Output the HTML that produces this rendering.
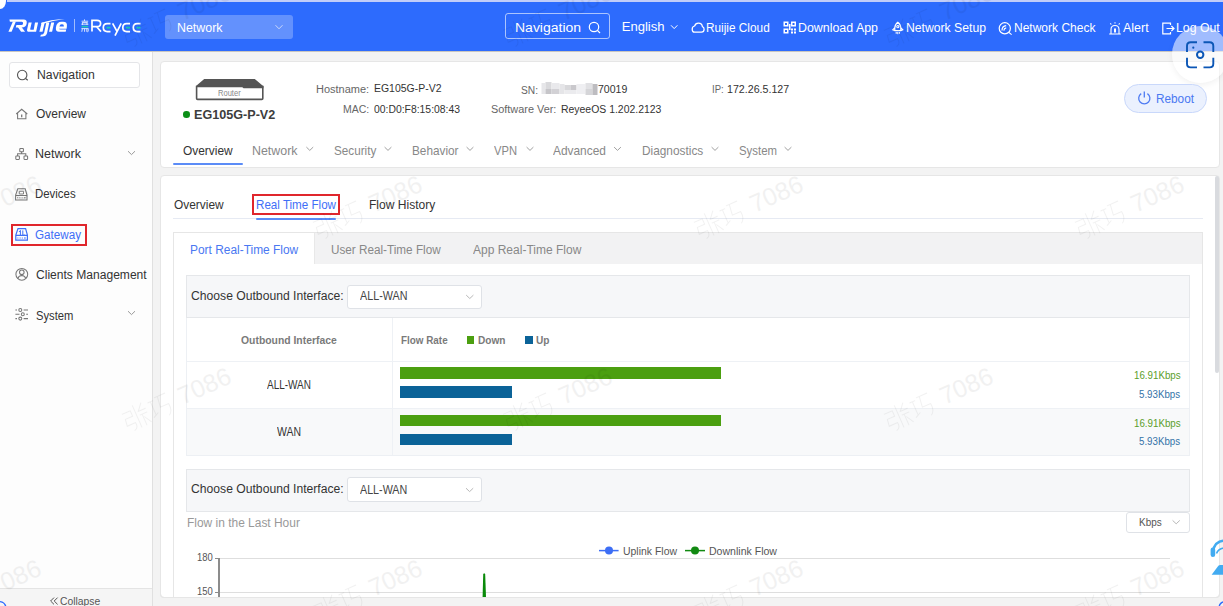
<!DOCTYPE html>
<html><head><meta charset="utf-8"><style>
*{box-sizing:border-box;margin:0;padding:0}
html,body{width:1223px;height:606px;overflow:hidden;background:#f3f3f3;font-family:"Liberation Sans",sans-serif;color:#333}
.t{position:absolute;white-space:nowrap;line-height:1}
.b{position:absolute}
svg{position:absolute;overflow:visible}
</style></head><body>
<div class="b" style="left:0;top:0;width:1223px;height:51px;background:#2d6bfd"></div>
<div class="b" style="left:7px;top:0;width:1216px;height:2px;background:#c1cdf9"></div>
<div class="b" style="left:0;top:0;width:6px;height:9px;background:#fff;border-bottom-right-radius:6px 8px"></div>
<div class="b" style="left:0;top:51px;width:153px;height:555px;background:#fdfdfd;border-right:1px solid #e0e0e0"></div>
<div class="b" style="left:0;top:51px;width:1223px;height:1px;background:#c9c6c0"></div>
<div class="b" style="left:0;top:588px;width:152px;height:18px;background:#f5f5f5;border-top:1px solid #e4e4e4"></div>
<div class="b" style="left:160px;top:61px;width:1060px;height:107px;background:#fff;border:1px solid #e6e6e6;border-radius:4px"></div>
<div class="b" style="left:160px;top:174.5px;width:1060px;height:423.5px;background:#fff;border:1px solid #e6e6e6;border-radius:4px"></div>
<svg style="left:0;top:0" width="1" height="1" fill="#fff">
<path d="M9.4 19.4 H23.6 Q27.3 19.4 26.7 23.2 Q26.1 27.5 21.4 27.5 H15.8 L16.4 25.1 H21.3 Q22.9 25.1 23.1 23.5 Q23.3 21.7 21.7 21.7 H9.9 Z"/>
<path d="M12.9 21.5 H15.9 L11.6 31.7 H8.4 Z"/>
<path d="M17.2 26.3 H20.9 L25.1 31.7 H21.1 Z"/>
<path d="M28.6 22.6 H31.7 L30.2 29 Q29.9 29.7 30.9 29.7 H33.7 L35 22.6 H38.1 L36.1 31.7 H29.1 Q26.6 31.7 27.1 29.4 Z"/>
<path d="M41.7 22.6 H44.7 L42.5 31.7 H39.4 Z"/>
<path d="M46.3 22.6 H49.3 L47.1 33.1 Q46.3 36.6 41.8 36.6 H40.2 L40.9 34.7 Q43.7 34.5 44.2 32.4 Z"/>
<path d="M51.2 22.6 H54.2 L52.1 31.7 H49 Z"/>
<path fill-rule="evenodd" d="M66.6 28.7 H59 Q58.9 29.5 60.6 29.5 H66.2 L65.7 31.8 H59 Q55.4 31.8 55.9 27.5 Q56.6 21.8 61.6 21.8 H63.1 Q67.5 21.8 66.9 26.2 Z M59.4 26.5 H63.9 Q64.1 24.2 62.2 24.2 H61.6 Q59.8 24.2 59.4 26.5 Z"/>
<path d="M41.2 22.9 Q50 19.3 64.8 18.9 Q52 20.4 41.6 24.2 Z"/>
</svg>
<div class="b" style="left:73.5px;top:19px;width:1px;height:12.6px;background:rgba(255,255,255,.55)"></div>
<svg style="left:0;top:0" width="1" height="1" fill="none" stroke="#e8eeff" stroke-width="0.9">
<path d="M84.5 19.4 V21 M81.6 21.2 H88.2 M82.2 22.6 H87.6 M81.4 24.2 H88.4 M82.4 22.4 V25 M87 22.4 V25"/>
<path d="M81.6 26.6 H88.2" stroke="#22c8b2" stroke-width="1.5"/>
<path d="M81.4 28.6 H88.4 M82.4 28.6 L81.8 31.8 M84.6 28.6 V31.8 M86.8 28.6 V31.8 M88.2 28.6 V31.2 Q88.2 31.8 87.4 31.8"/>
</svg>
<svg style="left:0;top:0" width="1" height="1" fill="none" stroke="#fff" stroke-width="1.7">
<path d="M92 31.6 V20.3 H97 Q100.6 20.3 100.6 23.5 Q100.6 26.7 97 26.7 H92.4 M96.6 26.7 L101 31.6"/>
<path d="M110.5 23.6 H107.3 Q103.3 23.6 103.3 27.6 Q103.3 31.6 107.3 31.6 H110.5"/>
<path d="M112.6 23.4 L117 31.3 M121.2 23.4 L115 35.6"/>
<path d="M130 23.6 H126.8 Q122.8 23.6 122.8 27.6 Q122.8 31.6 126.8 31.6 H130"/>
<path d="M140.5 23.6 H137.3 Q133.3 23.6 133.3 27.6 Q133.3 31.6 137.3 31.6 H140.5"/>
<path d="M106.5 27.6 H110.5 M126 27.6 H130 M136.5 27.6 H140.5" stroke="#1ccdb0"/>
</svg>
<div class="b" style="left:165px;top:15px;width:128px;height:23.5px;background:rgba(255,255,255,.26);border-radius:3px"></div>
<div class="t" style="left:177.00px;top:20.66px;font-size:13.08px;color:#ffffff;font-weight:normal;font-style:normal;transform:scaleX(0.9485);transform-origin:0 0;">Network</div>
<svg style="left:0;top:0" width="1" height="1"><path d="M275.5 25.2 L279 28.8 L282.5 25.2" stroke="#c9d7fb" stroke-width="1" fill="none"/></svg>
<div class="b" style="left:505px;top:13.4px;width:105px;height:26px;border:1px solid rgba(255,255,255,.6);border-radius:3px"></div>
<div class="t" style="left:515.20px;top:20.86px;font-size:13.08px;color:#ffffff;font-weight:normal;font-style:normal;transform:scaleX(1.0694);transform-origin:0 0;">Navigation</div>
<svg style="left:0;top:0" width="1" height="1" fill="none" stroke="#fff" stroke-width="1.2"><circle cx="594" cy="27" r="4.7"/><path d="M597.4 30.4 L600 33"/></svg>
<div class="t" style="left:621.70px;top:19.86px;font-size:13.08px;color:#ffffff;font-weight:normal;font-style:normal;">English</div>
<svg style="left:0;top:0" width="1" height="1"><path d="M671 25.3 L674.2 28.6 L677.4 25.3" stroke="#fff" stroke-width="1" fill="none"/></svg>
<svg style="left:0;top:0" width="1" height="1" fill="none" stroke="#fff" stroke-width="1.25"><path d="M694.6 32.2 H701.4 Q704.1 32.2 704.1 29.3 Q704.1 27.2 702.4 26.6 Q702 23 698.4 23 Q695.4 23 694.6 26 Q692.2 26.5 692.2 29.2 Q692.2 32.2 694.6 32.2 Z"/></svg>
<div class="t" style="left:706.30px;top:20.86px;font-size:13.08px;color:#ffffff;font-weight:normal;font-style:normal;transform:scaleX(0.9034);transform-origin:0 0;">Ruijie Cloud</div>
<svg style="left:0;top:0" width="1" height="1" fill="#fff">
<path d="M783.5 21.5h5v5h-5z M785 23h2v2h-2z" fill-rule="evenodd"/>
<path d="M791 21.5h5v5h-5z M792.5 23h2v2h-2z" fill-rule="evenodd"/>
<path d="M783.5 28.5h5v5h-5z M785 30h2v2h-2z" fill-rule="evenodd"/>
<rect x="791" y="28.5" width="2" height="2"/><rect x="794" y="28.5" width="2" height="2"/><rect x="791" y="31.5" width="2" height="2"/><rect x="794" y="31.5" width="2" height="2"/><rect x="789" y="24" width="1.5" height="6"/>
</svg>
<div class="t" style="left:798.00px;top:20.86px;font-size:13.08px;color:#ffffff;font-weight:normal;font-style:normal;transform:scaleX(0.9481);transform-origin:0 0;">Download App</div>
<svg style="left:0;top:0" width="1" height="1" fill="none" stroke="#fff" stroke-width="1.15"><path d="M897.8 22.2 Q900.8 24.4 900.8 28 V30.6 H894.8 V28 Q894.8 24.4 897.8 22.2 Z M894.8 27.6 L892.8 29.8 L894.8 30.6 M900.8 27.6 L902.8 29.8 L900.8 30.6"/><circle cx="897.8" cy="26.6" r="1.1"/><path d="M896.2 32 V33.8 M897.8 32 V34.2 M899.4 32 V33.8" stroke-width="1"/></svg>
<div class="t" style="left:906.00px;top:20.86px;font-size:13.08px;color:#ffffff;font-weight:normal;font-style:normal;transform:scaleX(0.9322);transform-origin:0 0;">Network Setup</div>
<svg style="left:0;top:0" width="1" height="1" fill="none" stroke="#fff" stroke-width="1.2"><circle cx="1004.8" cy="28.3" r="5.6"/><path d="M1002 30.5 Q1002 26 1006.2 25.6 M1003.8 30.6 Q1004 28.2 1006.2 27.8" /><path d="M1008.8 32.4 L1011.6 34.6"/></svg>
<div class="t" style="left:1013.80px;top:20.66px;font-size:13.08px;color:#ffffff;font-weight:normal;font-style:normal;transform:scaleX(0.9182);transform-origin:0 0;">Network Check</div>
<svg style="left:0;top:0" width="1" height="1" fill="none" stroke="#fff" stroke-width="1.1"><path d="M1111 33.8 V29.5 Q1111 25.5 1115 25.5 Q1119 25.5 1119 29.5 V33.8 M1109.2 34 H1120.8 M1115 22.3 V23.6 M1110.3 23.3 L1111.3 24.5 M1119.7 23.3 L1118.7 24.5"/><rect x="1114" y="28.5" width="2" height="4" fill="#fff" stroke="none"/></svg>
<div class="t" style="left:1122.80px;top:20.66px;font-size:13.08px;color:#ffffff;font-weight:normal;font-style:normal;transform:scaleX(0.9560);transform-origin:0 0;">Alert</div>
<svg style="left:0;top:0" width="1" height="1" fill="none" stroke="#fff" stroke-width="1.2"><path d="M1170.5 25 V23.2 H1162.8 V33.8 H1170.5 V32 M1166.5 28.5 H1174 M1171.4 26 L1174 28.5 L1171.4 31"/></svg>
<div class="t" style="left:1176.30px;top:20.66px;font-size:13.08px;color:#ffffff;font-weight:normal;font-style:normal;transform:scaleX(0.9384);transform-origin:0 0;">Log Out</div>
<div class="b" style="left:1172.2px;top:26.4px;width:56.6px;height:56.6px;border-radius:50%;background:rgba(255,255,255,.55);box-shadow:0 2px 6px rgba(0,0,0,.06)"></div>
<svg style="left:0;top:0" width="1" height="1" fill="none" stroke="#0b56b6" stroke-width="1.9">
<path d="M1187 52 V46 Q1187 42.3 1190.7 42.3 H1197 M1203.5 42.3 H1209.6 Q1213.3 42.3 1213.3 46 V52 M1213.3 57.8 V63.7 Q1213.3 67.4 1209.6 67.4 H1203.5 M1197 67.4 H1190.7 Q1187 67.4 1187 63.7 V57.8"/>
<circle cx="1200.2" cy="54.8" r="3.2" stroke-width="2"/>
<circle cx="1193.3" cy="47.7" r="1.1" fill="#0b56b6" stroke="none"/>
</svg>
<div class="b" style="left:8.6px;top:61.5px;width:131px;height:26.2px;background:#fff;border:1px solid #e4e5e8;border-radius:3px"></div>
<svg style="left:0;top:0" width="1" height="1" fill="none" stroke="#555" stroke-width="1.1"><circle cx="22.2" cy="75" r="4.7"/><path d="M25.6 78.5 L27.8 80.2"/></svg>
<div class="t" style="left:36.80px;top:68.26px;font-size:13.08px;color:#333333;font-weight:normal;font-style:normal;transform:scaleX(0.9367);transform-origin:0 0;">Navigation</div>
<svg style="left:0;top:0" width="1" height="1" fill="none" stroke="#777" stroke-width="1.05"><path d="M16.2 114 L21.7 109.3 L27.3 114 M17.6 113 V118.8 H25.9 V113"/><path d="M21.7 114.6 V117.2" stroke-width="1.3"/></svg>
<div class="t" style="left:35.60px;top:107.26px;font-size:13.08px;color:#333333;font-weight:normal;font-style:normal;transform:scaleX(0.9166);transform-origin:0 0;">Overview</div>
<svg style="left:0;top:0" width="1" height="1" fill="none" stroke="#777" stroke-width="1.05"><rect x="19.8" y="148.4" width="3.6" height="3.4" rx=".6"/><rect x="15.8" y="156" width="3.6" height="3.4" rx=".6"/><rect x="24" y="156" width="3.6" height="3.4" rx=".6"/><path d="M21.6 151.8 V153.8 M17.6 156 V153.8 H25.8 V156"/></svg>
<div class="t" style="left:35.40px;top:147.46px;font-size:13.08px;color:#333333;font-weight:normal;font-style:normal;transform:scaleX(0.9589);transform-origin:0 0;">Network</div>
<svg style="left:0;top:0" width="1" height="1"><path d="M128 151.2 L131.5 154.6 L135 151.2" stroke="#999" stroke-width="1" fill="none"/></svg>
<svg style="left:0;top:0" width="1" height="1" fill="none" stroke="#777" stroke-width="1.05"><path d="M17.8 188.8 H25.2 L27 195 V200 H15.6 V195 Z M15.6 195.5 H27"/><path d="M19.3 191.3 H23.5 V194 H19.3 Z" stroke-width=".9"/><path d="M17.2 197.8 H18.2 M19.4 197.8 H20.4 M21.6 197.8 H22.6 M23.8 197.8 H25.6" stroke-width="1"/></svg>
<div class="t" style="left:35.40px;top:187.46px;font-size:13.08px;color:#333333;font-weight:normal;font-style:normal;transform:scaleX(0.8730);transform-origin:0 0;">Devices</div>
<svg style="left:0;top:0" width="1" height="1" fill="none" stroke="#3f6ff7" stroke-width="1.2"><path d="M18 228.6 H25.6 L27.4 235 V240.2 H15.8 V235 Z M15.8 235.4 H27.4"/><path d="M20.4 236 V230.4 M19 232 L20.4 230.4 M22.8 230.4 V236 L24.2 234.4" stroke-width="1"/><path d="M17.4 238 H18.4 M19.6 238 H20.6 M21.8 238 H22.8 M24 238 H25.8" stroke-width="1"/></svg>
<div class="t" style="left:35.00px;top:227.86px;font-size:13.08px;color:#3f6ff7;font-weight:normal;font-style:normal;transform:scaleX(0.8914);transform-origin:0 0;">Gateway</div>
<div class="b" style="left:11px;top:224px;width:75.7px;height:21.6px;border:2px solid #e0262c"></div>
<svg style="left:0;top:0" width="1" height="1" fill="none" stroke="#777" stroke-width="1.05"><circle cx="21.8" cy="274.3" r="5.9"/><circle cx="21.8" cy="272.3" r="2.3"/><path d="M17.8 278.6 Q18.6 275.6 21.8 275.4 Q25 275.6 25.8 278.6"/></svg>
<div class="t" style="left:35.60px;top:268.06px;font-size:13.08px;color:#333333;font-weight:normal;font-style:normal;transform:scaleX(0.9228);transform-origin:0 0;">Clients Management</div>
<svg style="left:0;top:0" width="1" height="1" fill="none" stroke="#777" stroke-width="1.05"><path d="M15.4 310 H17 M23.6 310 H28 M15.4 314.3 H19.5 M26.2 314.3 H28 M15.4 318.6 H17 M23.6 318.6 H28"/><circle cx="20.3" cy="310" r="1.5"/><circle cx="22.8" cy="314.3" r="1.5"/><circle cx="20.3" cy="318.6" r="1.5"/></svg>
<div class="t" style="left:35.60px;top:308.66px;font-size:13.08px;color:#333333;font-weight:normal;font-style:normal;transform:scaleX(0.8573);transform-origin:0 0;">System</div>
<svg style="left:0;top:0" width="1" height="1"><path d="M128 311.2 L131.5 314.6 L135 311.2" stroke="#999" stroke-width="1" fill="none"/></svg>
<svg style="left:0;top:0" width="1" height="1" fill="none" stroke="#555" stroke-width="1"><path d="M54 597.6 L50.6 601 L54 604.4 M57.6 597.6 L54.2 601 L57.6 604.4"/></svg>
<div class="t" style="left:59.50px;top:594.79px;font-size:11.63px;color:#555;font-weight:normal;font-style:normal;transform:scaleX(0.8910);transform-origin:0 0;">Collapse</div>
<svg style="left:0;top:0" width="1" height="1"><path d="M-0.5 601.6 Q4.6 602 5.8 606.5" stroke="#2d6bfd" stroke-width="1.4" fill="#fff"/></svg>
<svg style="left:0;top:0" width="1" height="1">
<path d="M204.2 79 H254.8 L263.4 86.2 V88.3 H243.5 L242.3 87 H196 V86 Z" fill="#555"/>
<path d="M196.6 86.5 H262.8 V98.4 Q262.8 99.4 261.8 99.4 H197.6 Q196.6 99.4 196.6 98.4 Z" fill="none" stroke="#555" stroke-width="1.6"/>
</svg>
<div class="t" style="left:218.10px;top:89.49px;font-size:9.01px;color:#8a8a8a;font-weight:normal;font-style:normal;transform:scaleX(0.8397);transform-origin:0 0;">Router</div>
<div class="b" style="left:183.2px;top:111.3px;width:6.6px;height:6.6px;border-radius:50%;background:#0b8f17"></div>
<div class="t" style="left:193.60px;top:109.64px;font-size:11.92px;color:#3d3d3d;font-weight:bold;font-style:normal;transform:scaleX(1.0589);transform-origin:0 0;">EG105G-P-V2</div>
<div class="t" style="left:316.40px;top:83.98px;font-size:11.05px;color:#666;font-weight:normal;font-style:normal;transform:scaleX(0.9942);transform-origin:0 0;">Hostname:</div>
<div class="t" style="left:374.00px;top:83.28px;font-size:11.05px;color:#333;font-weight:normal;font-style:normal;transform:scaleX(0.9474);transform-origin:0 0;">EG105G-P-V2</div>
<div class="t" style="left:343.30px;top:104.38px;font-size:11.05px;color:#666;font-weight:normal;font-style:normal;transform:scaleX(0.9487);transform-origin:0 0;">MAC:</div>
<div class="t" style="left:374.00px;top:103.78px;font-size:11.05px;color:#333;font-weight:normal;font-style:normal;transform:scaleX(0.9397);transform-origin:0 0;">00:D0:F8:15:08:43</div>
<div class="t" style="left:520.60px;top:84.58px;font-size:11.05px;color:#666;font-weight:normal;font-style:normal;transform:scaleX(0.9243);transform-origin:0 0;">SN:</div>
<svg style="left:0;top:0" width="1" height="1">
<rect x="541.5" y="83" width="4" height="11" fill="#e6e6e9"/>
<rect x="545.5" y="82" width="6" height="7" fill="#d9d9dc"/><rect x="545.5" y="89" width="6" height="5" fill="#c6c5c9"/>
<rect x="551.5" y="83" width="8" height="6" fill="#e9e9ec"/><rect x="551.5" y="89" width="8" height="5" fill="#d2d1d5"/>
<rect x="559.5" y="84" width="5" height="10" fill="#e5e5e8"/>
<rect x="564.5" y="85" width="6" height="5" fill="#d8d8db"/><rect x="570.5" y="85" width="6" height="5" fill="#c9c8cc"/>
<rect x="564.5" y="90" width="12" height="4" fill="#ebebee"/>
<rect x="576.5" y="84" width="9" height="10" fill="#efeff2"/>
<rect x="585.5" y="83" width="7" height="6" fill="#e1e1e4"/><rect x="585.5" y="89" width="7" height="6" fill="#d5d5d8"/>
<rect x="592.5" y="84" width="5" height="11" fill="#bdbcc0"/>
</svg>
<div class="t" style="left:597.70px;top:83.98px;font-size:11.05px;color:#333;font-weight:normal;font-style:normal;transform:scaleX(0.9541);transform-origin:0 0;">70019</div>
<div class="t" style="left:490.50px;top:104.28px;font-size:11.05px;color:#666;font-weight:normal;font-style:normal;transform:scaleX(0.9859);transform-origin:0 0;">Software Ver:</div>
<div class="t" style="left:560.60px;top:103.58px;font-size:11.05px;color:#333;font-weight:normal;font-style:normal;transform:scaleX(0.9448);transform-origin:0 0;">ReyeeOS 1.202.2123</div>
<div class="t" style="left:711.60px;top:83.98px;font-size:11.05px;color:#666;font-weight:normal;font-style:normal;transform:scaleX(0.8646);transform-origin:0 0;">IP:</div>
<div class="t" style="left:727.30px;top:83.98px;font-size:11.05px;color:#333;font-weight:normal;font-style:normal;transform:scaleX(0.9642);transform-origin:0 0;">172.26.5.127</div>
<div class="b" style="left:1124px;top:83.8px;width:83px;height:29.7px;border-radius:15px;background:#ebf1fe;border:1px solid #c9d8fb"></div>
<svg style="left:0;top:0" width="1" height="1" fill="none" stroke="#4f7cf3" stroke-width="1.3"><path d="M1141.2 93.6 A5.6 5.6 0 1 0 1147.4 93.6"/><path d="M1144.3 91.6 V97.6"/></svg>
<div class="t" style="left:1156.00px;top:92.24px;font-size:13.52px;color:#4a78f2;font-weight:normal;font-style:normal;transform:scaleX(0.8717);transform-origin:0 0;">Reboot</div>
<div class="t" style="left:183.20px;top:143.91px;font-size:13.37px;color:#333;font-weight:normal;font-style:normal;transform:scaleX(0.8913);transform-origin:0 0;">Overview</div>
<div class="b" style="left:173px;top:162.9px;width:70px;height:2.2px;background:#5b8cf7;border-radius:1px"></div>
<div class="t" style="left:252.40px;top:143.91px;font-size:13.37px;color:#888888;font-weight:normal;font-style:normal;transform:scaleX(0.9279);transform-origin:0 0;">Network</div>
<svg style="left:0;top:0" width="1" height="1"><path d="M306.40000000000003 147.1 L309.8 150.4 L313.2 147.1" stroke="#a0a0a0" stroke-width="1" fill="none"/></svg>
<div class="t" style="left:334.30px;top:143.91px;font-size:13.37px;color:#888888;font-weight:normal;font-style:normal;transform:scaleX(0.8763);transform-origin:0 0;">Security</div>
<svg style="left:0;top:0" width="1" height="1"><path d="M384.6 147.1 L388 150.4 L391.4 147.1" stroke="#a0a0a0" stroke-width="1" fill="none"/></svg>
<div class="t" style="left:412.00px;top:143.91px;font-size:13.37px;color:#888888;font-weight:normal;font-style:normal;transform:scaleX(0.8815);transform-origin:0 0;">Behavior</div>
<svg style="left:0;top:0" width="1" height="1"><path d="M466.6 147.1 L470 150.4 L473.4 147.1" stroke="#a0a0a0" stroke-width="1" fill="none"/></svg>
<div class="t" style="left:494.00px;top:143.91px;font-size:13.37px;color:#888888;font-weight:normal;font-style:normal;transform:scaleX(0.8370);transform-origin:0 0;">VPN</div>
<svg style="left:0;top:0" width="1" height="1"><path d="M526.6 147.1 L530 150.4 L533.4 147.1" stroke="#a0a0a0" stroke-width="1" fill="none"/></svg>
<div class="t" style="left:553.00px;top:143.91px;font-size:13.37px;color:#888888;font-weight:normal;font-style:normal;transform:scaleX(0.8907);transform-origin:0 0;">Advanced</div>
<svg style="left:0;top:0" width="1" height="1"><path d="M614.1 147.1 L617.5 150.4 L620.9 147.1" stroke="#a0a0a0" stroke-width="1" fill="none"/></svg>
<div class="t" style="left:641.70px;top:143.91px;font-size:13.37px;color:#888888;font-weight:normal;font-style:normal;transform:scaleX(0.8867);transform-origin:0 0;">Diagnostics</div>
<svg style="left:0;top:0" width="1" height="1"><path d="M711.6 147.1 L715 150.4 L718.4 147.1" stroke="#a0a0a0" stroke-width="1" fill="none"/></svg>
<div class="t" style="left:739.00px;top:143.91px;font-size:13.37px;color:#888888;font-weight:normal;font-style:normal;transform:scaleX(0.8521);transform-origin:0 0;">System</div>
<svg style="left:0;top:0" width="1" height="1"><path d="M784.6 147.1 L788 150.4 L791.4 147.1" stroke="#a0a0a0" stroke-width="1" fill="none"/></svg>
<div class="t" style="left:173.70px;top:197.91px;font-size:13.37px;color:#333;font-weight:normal;font-style:normal;transform:scaleX(0.8913);transform-origin:0 0;">Overview</div>
<div class="t" style="left:256.10px;top:197.91px;font-size:13.37px;color:#3f6ff7;font-weight:normal;font-style:normal;transform:scaleX(0.8688);transform-origin:0 0;">Real Time Flow</div>
<div class="t" style="left:368.80px;top:197.91px;font-size:13.37px;color:#333;font-weight:normal;font-style:normal;transform:scaleX(0.9015);transform-origin:0 0;">Flow History</div>
<div class="b" style="left:173px;top:218.3px;width:1030px;height:1px;background:#e6eaf3"></div>
<div class="b" style="left:256px;top:217.8px;width:80px;height:2.2px;background:#5b8cf7;border-radius:1px"></div>
<div class="b" style="left:252px;top:194.2px;width:88.1px;height:20.6px;border:2px solid #e0262c"></div>
<div class="b" style="left:173px;top:231.5px;width:1030px;height:370px;border:1px solid #e6e6e6;background:#fff"></div>
<div class="b" style="left:314px;top:232.5px;width:888px;height:31px;background:#f2f2f3;border-left:1px solid #e8e8e8"></div>
<div class="t" style="left:190.00px;top:242.76px;font-size:13.08px;color:#4a78f2;font-weight:normal;font-style:normal;transform:scaleX(0.9118);transform-origin:0 0;">Port Real-Time Flow</div>
<div class="t" style="left:331.00px;top:242.76px;font-size:13.08px;color:#888;font-weight:normal;font-style:normal;transform:scaleX(0.8964);transform-origin:0 0;">User Real-Time Flow</div>
<div class="t" style="left:473.00px;top:242.76px;font-size:13.08px;color:#888;font-weight:normal;font-style:normal;transform:scaleX(0.9182);transform-origin:0 0;">App Real-Time Flow</div>
<div class="b" style="left:186px;top:274.7px;width:1004px;height:43.5px;background:#f6f7f9;border:1px solid #e5e7ea"></div>
<div class="t" style="left:190.60px;top:288.57px;font-size:13.66px;color:#333;font-weight:normal;font-style:normal;transform:scaleX(0.8901);transform-origin:0 0;">Choose Outbound Interface:</div>
<div class="b" style="left:347.3px;top:284.6px;width:135.09999999999997px;height:24.599999999999966px;background:#fff;border:1px solid #dfe2e7;border-radius:3px"></div>
<div class="t" style="left:359.90px;top:290.40px;font-size:12.79px;color:#444;font-weight:normal;font-style:normal;transform:scaleX(0.8421);transform-origin:0 0;">ALL-WAN</div>
<svg style="left:0;top:0" width="1" height="1"><path d="M466.2 295.1 L469.8 298.5 L473.40000000000003 295.1" stroke="#b8b8b8" stroke-width="1" fill="none"/></svg>
<div class="b" style="left:186px;top:318px;width:1004px;height:138px;border:1px solid #edf0f4;border-top:none"></div>
<div class="b" style="left:187px;top:360.5px;width:1002px;height:1px;background:#eef1f5"></div>
<div class="b" style="left:187px;top:408px;width:1002px;height:47px;background:#f8f9fa;border-top:1px solid #eef1f5"></div>
<div class="b" style="left:391.5px;top:318px;width:1px;height:137px;background:#eef1f5"></div>
<div class="t" style="left:241.30px;top:334.01px;font-size:11.77px;color:#7a7a7a;font-weight:bold;font-style:normal;transform:scaleX(0.8825);transform-origin:0 0;">Outbound Interface</div>
<div class="t" style="left:400.50px;top:334.31px;font-size:11.77px;color:#7a7a7a;font-weight:bold;font-style:normal;transform:scaleX(0.8395);transform-origin:0 0;">Flow Rate</div>
<div class="b" style="left:466.5px;top:336.2px;width:7.7px;height:7.7px;background:#4b9f10"></div>
<div class="t" style="left:477.70px;top:334.31px;font-size:11.77px;color:#7a7a7a;font-weight:bold;font-style:normal;transform:scaleX(0.8588);transform-origin:0 0;">Down</div>
<div class="b" style="left:525px;top:336.2px;width:7.5px;height:7.7px;background:#0b6398"></div>
<div class="t" style="left:535.70px;top:334.31px;font-size:11.77px;color:#7a7a7a;font-weight:bold;font-style:normal;transform:scaleX(0.8589);transform-origin:0 0;">Up</div>
<div class="b" style="left:400.3px;top:367.4px;width:320.7px;height:11.7px;background:#4b9f10"></div>
<div class="b" style="left:400.3px;top:386.29999999999995px;width:112.2px;height:11.7px;background:#0b6398"></div>
<div class="b" style="left:400.3px;top:414.8px;width:320.7px;height:11.7px;background:#4b9f10"></div>
<div class="b" style="left:400.3px;top:433.7px;width:112.2px;height:11.7px;background:#0b6398"></div>
<div class="t" style="left:267.00px;top:379.32px;font-size:12.35px;color:#333;font-weight:normal;font-style:normal;transform:scaleX(0.8076);transform-origin:0 0;">ALL-WAN</div>
<div class="t" style="left:277.00px;top:426.32px;font-size:12.35px;color:#333;font-weight:normal;font-style:normal;transform:scaleX(0.8464);transform-origin:0 0;">WAN</div>
<div class="t" style="left:1133.70px;top:371.24px;font-size:10.32px;color:#5c9e2a;font-weight:normal;font-style:normal;transform:scaleX(0.9467);transform-origin:0 0;">16.91Kbps</div>
<div class="t" style="left:1139.30px;top:389.84px;font-size:10.32px;color:#3473a8;font-weight:normal;font-style:normal;transform:scaleX(0.9426);transform-origin:0 0;">5.93Kbps</div>
<div class="t" style="left:1133.70px;top:418.54px;font-size:10.32px;color:#5c9e2a;font-weight:normal;font-style:normal;transform:scaleX(0.9467);transform-origin:0 0;">16.91Kbps</div>
<div class="t" style="left:1139.30px;top:437.14px;font-size:10.32px;color:#3473a8;font-weight:normal;font-style:normal;transform:scaleX(0.9426);transform-origin:0 0;">5.93Kbps</div>
<div class="b" style="left:186px;top:469px;width:1004px;height:42.5px;background:#f6f7f9;border:1px solid #e5e7ea"></div>
<div class="t" style="left:190.60px;top:481.57px;font-size:13.66px;color:#333;font-weight:normal;font-style:normal;transform:scaleX(0.8901);transform-origin:0 0;">Choose Outbound Interface:</div>
<div class="b" style="left:347.4px;top:477px;width:135.10000000000002px;height:25px;background:#fff;border:1px solid #dfe2e7;border-radius:3px"></div>
<div class="t" style="left:360.00px;top:483.60px;font-size:12.79px;color:#444;font-weight:normal;font-style:normal;transform:scaleX(0.8385);transform-origin:0 0;">ALL-WAN</div>
<svg style="left:0;top:0" width="1" height="1"><path d="M466.0 488.20000000000005 L469.6 491.6 L473.20000000000005 488.20000000000005" stroke="#b8b8b8" stroke-width="1" fill="none"/></svg>
<div class="t" style="left:186.60px;top:516.95px;font-size:12.50px;color:#999;font-weight:normal;font-style:normal;transform:scaleX(0.9558);transform-origin:0 0;">Flow in the Last Hour</div>
<div class="b" style="left:1126px;top:512px;width:63.6px;height:21.3px;background:#fff;border:1px solid #dfe2e7;border-radius:3px"></div>
<div class="t" style="left:1138.60px;top:518.34px;font-size:10.32px;color:#555;font-weight:normal;font-style:normal;transform:scaleX(0.9648);transform-origin:0 0;">Kbps</div>
<svg style="left:0;top:0" width="1" height="1"><path d="M1172.6 520.4 L1176.2 523.8 L1179.8 520.4" stroke="#b8b8b8" stroke-width="1" fill="none"/></svg>
<svg style="left:0;top:0" width="1" height="1"><path d="M599 550.6 H618.6" stroke="#3d6ef5" stroke-width="1.5"/><circle cx="609" cy="550.6" r="4" fill="#3d6ef5"/><path d="M685 550.6 H705" stroke="#128a12" stroke-width="1.5"/><circle cx="695" cy="550.6" r="4" fill="#128a12"/></svg>
<div class="t" style="left:623.00px;top:545.58px;font-size:11.05px;color:#555;font-weight:normal;font-style:normal;transform:scaleX(0.9455);transform-origin:0 0;">Uplink Flow</div>
<div class="t" style="left:709.00px;top:545.58px;font-size:11.05px;color:#555;font-weight:normal;font-style:normal;transform:scaleX(0.9544);transform-origin:0 0;">Downlink Flow</div>
<div class="b" style="left:219px;top:558px;width:951px;height:1px;background:#dedede"></div>
<div class="b" style="left:219px;top:592px;width:951px;height:1px;background:#dedede"></div>
<div class="b" style="left:218.2px;top:558px;width:1.6px;height:40px;background:#8c8c8c"></div>
<div class="b" style="left:215.2px;top:558px;width:4px;height:1px;background:#8c8c8c"></div>
<div class="b" style="left:215.2px;top:592px;width:4px;height:1px;background:#8c8c8c"></div>
<div class="t" style="left:196.60px;top:552.91px;font-size:10.17px;color:#555;font-weight:normal;font-style:normal;transform:scaleX(0.9299);transform-origin:0 0;">180</div>
<div class="t" style="left:196.60px;top:586.91px;font-size:10.17px;color:#555;font-weight:normal;font-style:normal;transform:scaleX(0.9299);transform-origin:0 0;">150</div>
<svg style="left:0;top:0" width="1" height="1"><path d="M482.6 597 L483.2 574.5 Q484.2 571.8 485.2 574.5 L486 597 Z" fill="#0a8a0a"/></svg>
<div class="b" style="left:153px;top:598px;width:1070px;height:8px;background:#f3f3f3"></div>
<div class="b" style="left:160px;top:593px;width:1060px;height:5px;border:1px solid #e6e6e6;border-top:none;border-radius:0 0 4px 4px;background:transparent"></div>
<div class="b" style="left:1215px;top:176px;width:4px;height:197px;background:#d9dbdf;border-radius:2px"></div>
<svg style="left:0;top:0" width="1" height="1">
<path d="M1213 552 Q1214 541.5 1224 540.5" stroke="#42abf1" stroke-width="2.6" fill="none"/>
<rect x="1210.6" y="547.5" width="4.6" height="9.5" rx="2.3" fill="#42abf1"/>
<path d="M1211.6 574.8 L1218.6 565.6 Q1219.2 564.9 1220.2 564.9 H1223.5 V574.8 Z" fill="#42abf1"/><path d="M1216.5 553.5 Q1218 549 1223.5 548" stroke="#42abf1" stroke-width="1.6" fill="none"/>
<path d="M1219.2 606.5 Q1220 602.6 1223.8 601.8" stroke="#2d6bfd" stroke-width="1.4" fill="none"/>
</svg>
<svg style="left:0;top:0" width="1" height="1"><g transform="translate(176 14) rotate(-24)" opacity="0.05" fill="none" stroke="#000" stroke-width="0.9">
<path d="M-56 -7 H-47 V-1 H-55 L-56 6 H-47 Q-46 12 -51 13 M-43 -11 V13 M-34 -10 L-40 -3 H-32 M-40 1 H-32 M-37.5 1 V13 M-36.5 4 L-32 12"/>
<path d="M-28 -7 H-22 M-25 -7 V7 M-28 9 L-22 6 M-20 -9 H-8 M-16.5 -9 L-18 2 H-9 Q-8 10 -13 13"/>
<text x="3" y="9" font-family="Liberation Sans" font-size="25" fill="#000" stroke="none">7086</text>
</g></svg>
<svg style="left:0;top:0" width="1" height="1"><g transform="translate(557 14) rotate(-24)" opacity="0.05" fill="none" stroke="#000" stroke-width="0.9">
<path d="M-56 -7 H-47 V-1 H-55 L-56 6 H-47 Q-46 12 -51 13 M-43 -11 V13 M-34 -10 L-40 -3 H-32 M-40 1 H-32 M-37.5 1 V13 M-36.5 4 L-32 12"/>
<path d="M-28 -7 H-22 M-25 -7 V7 M-28 9 L-22 6 M-20 -9 H-8 M-16.5 -9 L-18 2 H-9 Q-8 10 -13 13"/>
<text x="3" y="9" font-family="Liberation Sans" font-size="25" fill="#000" stroke="none">7086</text>
</g></svg>
<svg style="left:0;top:0" width="1" height="1"><g transform="translate(938 14) rotate(-24)" opacity="0.05" fill="none" stroke="#000" stroke-width="0.9">
<path d="M-56 -7 H-47 V-1 H-55 L-56 6 H-47 Q-46 12 -51 13 M-43 -11 V13 M-34 -10 L-40 -3 H-32 M-40 1 H-32 M-37.5 1 V13 M-36.5 4 L-32 12"/>
<path d="M-28 -7 H-22 M-25 -7 V7 M-28 9 L-22 6 M-20 -9 H-8 M-16.5 -9 L-18 2 H-9 Q-8 10 -13 13"/>
<text x="3" y="9" font-family="Liberation Sans" font-size="25" fill="#000" stroke="none">7086</text>
</g></svg>
<svg style="left:0;top:0" width="1" height="1"><g transform="translate(-14 206) rotate(-24)" opacity="0.05" fill="none" stroke="#000" stroke-width="0.9">
<path d="M-56 -7 H-47 V-1 H-55 L-56 6 H-47 Q-46 12 -51 13 M-43 -11 V13 M-34 -10 L-40 -3 H-32 M-40 1 H-32 M-37.5 1 V13 M-36.5 4 L-32 12"/>
<path d="M-28 -7 H-22 M-25 -7 V7 M-28 9 L-22 6 M-20 -9 H-8 M-16.5 -9 L-18 2 H-9 Q-8 10 -13 13"/>
<text x="3" y="9" font-family="Liberation Sans" font-size="25" fill="#000" stroke="none">7086</text>
</g></svg>
<svg style="left:0;top:0" width="1" height="1"><g transform="translate(367 206) rotate(-24)" opacity="0.05" fill="none" stroke="#000" stroke-width="0.9">
<path d="M-56 -7 H-47 V-1 H-55 L-56 6 H-47 Q-46 12 -51 13 M-43 -11 V13 M-34 -10 L-40 -3 H-32 M-40 1 H-32 M-37.5 1 V13 M-36.5 4 L-32 12"/>
<path d="M-28 -7 H-22 M-25 -7 V7 M-28 9 L-22 6 M-20 -9 H-8 M-16.5 -9 L-18 2 H-9 Q-8 10 -13 13"/>
<text x="3" y="9" font-family="Liberation Sans" font-size="25" fill="#000" stroke="none">7086</text>
</g></svg>
<svg style="left:0;top:0" width="1" height="1"><g transform="translate(748 206) rotate(-24)" opacity="0.05" fill="none" stroke="#000" stroke-width="0.9">
<path d="M-56 -7 H-47 V-1 H-55 L-56 6 H-47 Q-46 12 -51 13 M-43 -11 V13 M-34 -10 L-40 -3 H-32 M-40 1 H-32 M-37.5 1 V13 M-36.5 4 L-32 12"/>
<path d="M-28 -7 H-22 M-25 -7 V7 M-28 9 L-22 6 M-20 -9 H-8 M-16.5 -9 L-18 2 H-9 Q-8 10 -13 13"/>
<text x="3" y="9" font-family="Liberation Sans" font-size="25" fill="#000" stroke="none">7086</text>
</g></svg>
<svg style="left:0;top:0" width="1" height="1"><g transform="translate(1129 206) rotate(-24)" opacity="0.05" fill="none" stroke="#000" stroke-width="0.9">
<path d="M-56 -7 H-47 V-1 H-55 L-56 6 H-47 Q-46 12 -51 13 M-43 -11 V13 M-34 -10 L-40 -3 H-32 M-40 1 H-32 M-37.5 1 V13 M-36.5 4 L-32 12"/>
<path d="M-28 -7 H-22 M-25 -7 V7 M-28 9 L-22 6 M-20 -9 H-8 M-16.5 -9 L-18 2 H-9 Q-8 10 -13 13"/>
<text x="3" y="9" font-family="Liberation Sans" font-size="25" fill="#000" stroke="none">7086</text>
</g></svg>
<svg style="left:0;top:0" width="1" height="1"><g transform="translate(176 398) rotate(-24)" opacity="0.05" fill="none" stroke="#000" stroke-width="0.9">
<path d="M-56 -7 H-47 V-1 H-55 L-56 6 H-47 Q-46 12 -51 13 M-43 -11 V13 M-34 -10 L-40 -3 H-32 M-40 1 H-32 M-37.5 1 V13 M-36.5 4 L-32 12"/>
<path d="M-28 -7 H-22 M-25 -7 V7 M-28 9 L-22 6 M-20 -9 H-8 M-16.5 -9 L-18 2 H-9 Q-8 10 -13 13"/>
<text x="3" y="9" font-family="Liberation Sans" font-size="25" fill="#000" stroke="none">7086</text>
</g></svg>
<svg style="left:0;top:0" width="1" height="1"><g transform="translate(557 398) rotate(-24)" opacity="0.05" fill="none" stroke="#000" stroke-width="0.9">
<path d="M-56 -7 H-47 V-1 H-55 L-56 6 H-47 Q-46 12 -51 13 M-43 -11 V13 M-34 -10 L-40 -3 H-32 M-40 1 H-32 M-37.5 1 V13 M-36.5 4 L-32 12"/>
<path d="M-28 -7 H-22 M-25 -7 V7 M-28 9 L-22 6 M-20 -9 H-8 M-16.5 -9 L-18 2 H-9 Q-8 10 -13 13"/>
<text x="3" y="9" font-family="Liberation Sans" font-size="25" fill="#000" stroke="none">7086</text>
</g></svg>
<svg style="left:0;top:0" width="1" height="1"><g transform="translate(938 398) rotate(-24)" opacity="0.05" fill="none" stroke="#000" stroke-width="0.9">
<path d="M-56 -7 H-47 V-1 H-55 L-56 6 H-47 Q-46 12 -51 13 M-43 -11 V13 M-34 -10 L-40 -3 H-32 M-40 1 H-32 M-37.5 1 V13 M-36.5 4 L-32 12"/>
<path d="M-28 -7 H-22 M-25 -7 V7 M-28 9 L-22 6 M-20 -9 H-8 M-16.5 -9 L-18 2 H-9 Q-8 10 -13 13"/>
<text x="3" y="9" font-family="Liberation Sans" font-size="25" fill="#000" stroke="none">7086</text>
</g></svg>
<svg style="left:0;top:0" width="1" height="1"><g transform="translate(-14 590) rotate(-24)" opacity="0.05" fill="none" stroke="#000" stroke-width="0.9">
<path d="M-56 -7 H-47 V-1 H-55 L-56 6 H-47 Q-46 12 -51 13 M-43 -11 V13 M-34 -10 L-40 -3 H-32 M-40 1 H-32 M-37.5 1 V13 M-36.5 4 L-32 12"/>
<path d="M-28 -7 H-22 M-25 -7 V7 M-28 9 L-22 6 M-20 -9 H-8 M-16.5 -9 L-18 2 H-9 Q-8 10 -13 13"/>
<text x="3" y="9" font-family="Liberation Sans" font-size="25" fill="#000" stroke="none">7086</text>
</g></svg>
<svg style="left:0;top:0" width="1" height="1"><g transform="translate(367 590) rotate(-24)" opacity="0.05" fill="none" stroke="#000" stroke-width="0.9">
<path d="M-56 -7 H-47 V-1 H-55 L-56 6 H-47 Q-46 12 -51 13 M-43 -11 V13 M-34 -10 L-40 -3 H-32 M-40 1 H-32 M-37.5 1 V13 M-36.5 4 L-32 12"/>
<path d="M-28 -7 H-22 M-25 -7 V7 M-28 9 L-22 6 M-20 -9 H-8 M-16.5 -9 L-18 2 H-9 Q-8 10 -13 13"/>
<text x="3" y="9" font-family="Liberation Sans" font-size="25" fill="#000" stroke="none">7086</text>
</g></svg>
<svg style="left:0;top:0" width="1" height="1"><g transform="translate(748 590) rotate(-24)" opacity="0.05" fill="none" stroke="#000" stroke-width="0.9">
<path d="M-56 -7 H-47 V-1 H-55 L-56 6 H-47 Q-46 12 -51 13 M-43 -11 V13 M-34 -10 L-40 -3 H-32 M-40 1 H-32 M-37.5 1 V13 M-36.5 4 L-32 12"/>
<path d="M-28 -7 H-22 M-25 -7 V7 M-28 9 L-22 6 M-20 -9 H-8 M-16.5 -9 L-18 2 H-9 Q-8 10 -13 13"/>
<text x="3" y="9" font-family="Liberation Sans" font-size="25" fill="#000" stroke="none">7086</text>
</g></svg>
<svg style="left:0;top:0" width="1" height="1"><g transform="translate(1129 590) rotate(-24)" opacity="0.05" fill="none" stroke="#000" stroke-width="0.9">
<path d="M-56 -7 H-47 V-1 H-55 L-56 6 H-47 Q-46 12 -51 13 M-43 -11 V13 M-34 -10 L-40 -3 H-32 M-40 1 H-32 M-37.5 1 V13 M-36.5 4 L-32 12"/>
<path d="M-28 -7 H-22 M-25 -7 V7 M-28 9 L-22 6 M-20 -9 H-8 M-16.5 -9 L-18 2 H-9 Q-8 10 -13 13"/>
<text x="3" y="9" font-family="Liberation Sans" font-size="25" fill="#000" stroke="none">7086</text>
</g></svg>
</body></html>
